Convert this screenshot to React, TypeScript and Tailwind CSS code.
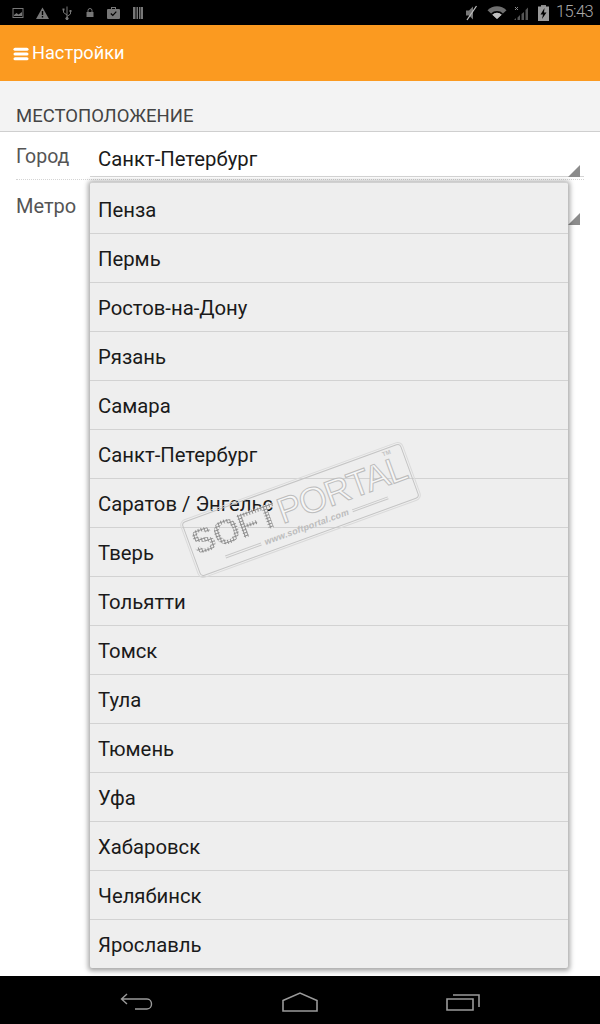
import { Menu } from "lucide-react";

const cities = [
  "Пенза",
  "Пермь",
  "Ростов-на-Дону",
  "Рязань",
  "Самара",
  "Санкт-Петербург",
  "Саратов / Энгельс",
  "Тверь",
  "Тольятти",
  "Томск",
  "Тула",
  "Тюмень",
  "Уфа",
  "Хабаровск",
  "Челябинск",
  "Ярославль",
];

function StatusLeft() {
  return (
    <div className="flex items-center pl-[12px] text-[#777]">
      <svg width="12" height="12" viewBox="0 0 12 12" fill="none" stroke="currentColor" className="mr-[12px]">
        <rect x="1" y="1.5" width="10" height="9" />
        <path d="M2 8l2.5-2 2 1.5L10 5v4H2z" fill="currentColor" stroke="none" />
      </svg>
      <svg width="13" height="12" viewBox="0 0 13 12" className="mr-[13px]">
        <path d="M6.5 0.5L13 12H0z" fill="currentColor" />
        <rect x="5.8" y="4" width="1.4" height="4" fill="#000" />
        <rect x="5.8" y="9" width="1.4" height="1.5" fill="#000" />
      </svg>
      <svg width="10" height="14" viewBox="0 0 10 14" fill="none" stroke="currentColor" className="mr-[14px]">
        <path d="M5 0.5V13M5 9L1.5 6.5V4M5 10.5L8.5 8V5.5" />
        <circle cx="5" cy="12.5" r="1.2" fill="currentColor" />
        <rect x="0.5" y="2.5" width="2" height="2" fill="currentColor" stroke="none" />
        <rect x="7.5" y="4" width="2" height="2" fill="currentColor" stroke="none" />
      </svg>
      <svg width="8" height="9" viewBox="0 0 8 9" className="mr-[13px]">
        <path d="M2 4V2.5a2 2 0 014 0V4" fill="none" stroke="currentColor" />
        <rect x="0.5" y="4" width="7" height="5" fill="currentColor" />
      </svg>
      <svg width="13" height="13" viewBox="0 0 13 13" className="mr-[13px]">
        <path d="M4 3V1h5v2h3a1 1 0 011 1v8a1 1 0 01-1 1H1a1 1 0 01-1-1V4a1 1 0 011-1zM5 2v1h3V2z" fill="currentColor" fillRule="evenodd" />
        <path d="M3.8 7.5l2 2 3.5-3.8" fill="none" stroke="#000" strokeWidth="1.2" />
      </svg>
      <svg width="10" height="12" viewBox="0 0 10 12">
        <path d="M0 0h2.5v12H0zM3.5 0h1.5v12H3.5zM6 0h1.5v12H6zM8 0h2v12H8z" fill="currentColor" />
      </svg>
    </div>
  );
}

function StatusRight() {
  return (
    <div className="flex items-center pr-[7px] text-[#8a8a8a]">
      <svg width="14" height="16" viewBox="0 0 14 16" className="mr-[9px]">
        <path d="M2 5.5h3l4-4v13l-4-4H2z" fill="#777" />
        <path d="M12.5 1L3 15" stroke="#bdbdbd" strokeWidth="1.3" />
      </svg>
      <svg width="20" height="13" viewBox="0 0 20 13" className="mr-[7px]">
        <path d="M0.5 4.2a13.5 13.5 0 0119 0L10 13z" fill="#6f6f6f" />
        <path d="M4 7.4a8.5 8.5 0 0112 0l-1.3 1.3a6.7 6.7 0 00-9.4 0z" fill="#000" />
        <path d="M5.3 8.7a6.7 6.7 0 019.4 0L10 13z" fill="#c0c0c0" />
      </svg>
      <svg width="16" height="16" viewBox="0 0 16 16" className="mr-[8px]">
        <path d="M1 2l3 3M4 2L1 5" stroke="#8a8a8a" strokeWidth="1" />
        <path d="M0 15h2v-2L0 15zM3.5 15h2.5v-5L3.5 12.5zM7.5 15H10V7L7.5 9zM11.5 15H14V2.5L11.5 5z" fill="#555" />
      </svg>
      <svg width="11" height="16" viewBox="0 0 11 16" className="mr-[7px]">
        <rect x="3" y="0" width="5" height="2" fill="#8a8a8a" />
        <rect x="0" y="1.5" width="11" height="14.5" fill="#9a9a9a" />
        <path d="M6.5 3L2.5 9.5h2.5L4 14l4.5-6.5H6z" fill="#000" />
      </svg>
      <span className="font-['Roboto',sans-serif] text-[16.5px] font-light leading-none tracking-[-0.6px] text-[#a8a8a8]">15:43</span>
    </div>
  );
}

function Arrow() {
  return <div className="h-[12px] w-[12px] bg-[#8c8c8c] [clip-path:polygon(100%_0,100%_100%,0_100%)]" />;
}

function Watermark() {
  return (
    <div className="pointer-events-none absolute left-[184px] top-[481px] flex h-[58px] w-[233px] rotate-[-20deg] flex-col items-center justify-center rounded-[4px] border border-[#c4c4c4] outline outline-1 outline-offset-1 outline-[#dadada]">
      <div className="flex items-baseline font-['Liberation_Sans',sans-serif] leading-none">
        <span className="bg-[radial-gradient(circle,#8f8f8f_1.1px,#efefef_1.4px)] bg-[length:3px_3px] bg-clip-text text-[35px] font-bold tracking-[-1px] text-transparent">SOFT</span>
        <span className="ml-[2px] text-[36px] tracking-[-1px] text-[#f6f6f6] [-webkit-text-stroke:1px_#bdbdbd]">PORTAL</span>
      </div>
      <div className="mt-[1px] flex items-center gap-[4px]">
        <div className="h-[3px] w-[38px] border-y border-[#c8c8c8]" />
        <span className="font-['Liberation_Sans',sans-serif] text-[9px] font-bold italic leading-none tracking-[0.2px] text-[#bcbcbc]">www.softportal.com</span>
        <div className="h-[3px] w-[38px] border-y border-[#c8c8c8]" />
      </div>
      <span className="absolute right-[11px] top-[1px] font-['Liberation_Sans',sans-serif] text-[6px] font-bold leading-none text-[#c4c4c4]">TM</span>
    </div>
  );
}

export default function App() {
  return (
    <div className="relative flex h-[1024px] w-[600px] flex-col overflow-hidden bg-white font-['Roboto',sans-serif]">
      <div className="flex h-[25px] shrink-0 items-center justify-between bg-black">
        <StatusLeft />
        <StatusRight />
      </div>

      <div className="flex h-[56px] shrink-0 items-center gap-[3px] bg-[#fb9a20] pl-[13px] pt-[1px] text-white">
        <Menu size={16} strokeWidth={3} absoluteStrokeWidth className="shrink-0 scale-x-110" />
        <span className="text-[18.2px] leading-none">Настройки</span>
      </div>

      <div className="flex h-[51px] shrink-0 items-end border-b border-[#cfcfcf] bg-[#f3f3f3] pb-[6px] pl-[16px]">
        <span className="text-[18.5px] leading-none text-[#444]">МЕСТОПОЛОЖЕНИЕ</span>
      </div>

      <div className="ml-[16px] mr-[16px] flex h-[48px] shrink-0 border-b border-dotted border-[#d4d4d4]">
        <span className="w-[74px] pt-[15px] text-[19.5px] leading-none text-[#555]">Город</span>
        <div className="relative h-[45px] flex-1 border-b border-[#d4d4d4] pl-[8px] pt-[17px] text-[20.3px] leading-none text-[#1a1a1a]">
          Санкт-Петербург
          <div className="absolute bottom-[-1px] right-[-4px] -translate-x-[8px]">
            <Arrow />
          </div>
        </div>
      </div>

      <div className="ml-[16px] mr-[16px] flex h-[49px] shrink-0">
        <span className="w-[74px] pt-[16px] text-[20px] leading-none text-[#555]">Метро</span>
        <div className="relative h-[45px] flex-1">
          <div className="absolute bottom-0 right-[-4px] -translate-x-[8px]">
            <Arrow />
          </div>
        </div>
      </div>

      <div className="flex-1" />

      <div className="flex h-[48px] shrink-0 items-center justify-center gap-[128px] bg-black pt-[3px] text-[#9a9a9a]">
        <svg width="34" height="20" viewBox="0 0 34 20" fill="none" stroke="currentColor" strokeWidth="1.4">
          <path d="M7 2L1.5 7 7 12M1.5 7H27c6 0 6 10 0 10H15" />
        </svg>
        <svg width="36" height="20" viewBox="0 0 36 20" fill="none" stroke="currentColor" strokeWidth="1.6">
          <path d="M1 8.5L18 1l17 7.5V19H1z" />
        </svg>
        <svg width="34" height="20" viewBox="0 0 34 20" fill="none" stroke="currentColor" strokeWidth="1.6">
          <path d="M1 7h26v11H1zM7 3h26v12" />
        </svg>
      </div>

      <div className="absolute left-[90px] top-[182px] flex h-[786px] w-[478px] flex-col rounded-[2px] border-t border-[#d0d0d0] bg-[#eeeeee] pt-[2px] shadow-[0_1px_5px_2px_rgba(0,0,0,0.35)]">
        {cities.map((city, i) => (
          <div
            key={city}
            className={
              i === cities.length - 1
                ? "flex h-[49px] shrink-0 items-center pl-[8px] pt-[2px] text-[20.3px] leading-none text-[#1a1a1a]"
                : "flex h-[49px] shrink-0 items-center border-b border-[#d2d2d2] pl-[8px] pt-[2px] text-[20.3px] leading-none text-[#1a1a1a]"
            }
          >
            {city}
          </div>
        ))}
      </div>

      <Watermark />
    </div>
  );
}
